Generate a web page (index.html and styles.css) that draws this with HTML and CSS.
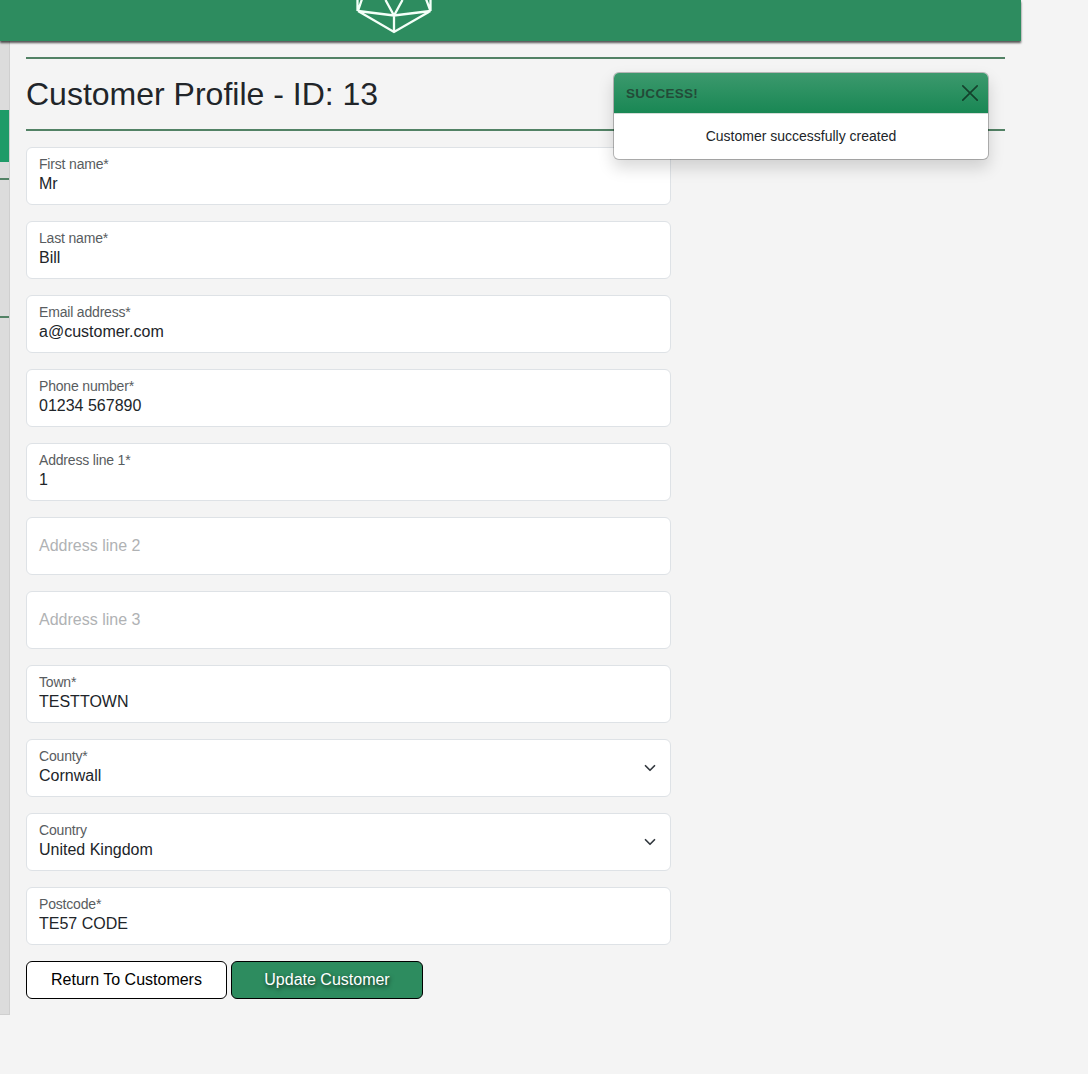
FILE: index.html
```
<!DOCTYPE html>
<html lang="en">
<head>
<meta charset="utf-8">
<title>Customer Profile</title>
<link rel="stylesheet" href="styles.css">
</head>
<body>
<header class="topbar">
  <svg class="logo" width="80" height="41" viewBox="0 0 80 41" fill="none" stroke="#f4fff8" stroke-width="2.300">
    <path d="M4 11 40 32l36.500-21M4 11 40 15.500 76.500 11M40 15.500V32M31.500 0 40 15.500 48.500 0M3.500-1v12M76.500-1v12M8-1 4 11M72-1l4.500 12"/>
  </svg>
</header>
<div class="shell">
  <aside class="sidebar">
    <div class="nav-active"></div>
    <hr class="nav-rule">
    <hr class="nav-rule nav-rule-last">
  </aside>
  <main class="content">
    <hr class="rule">
    <h1 class="title">Customer Profile - ID: 13</h1>
    <hr class="rule">
    <form class="form">
      <div class="field"><span class="label">First name*</span><span class="value">Mr</span></div>
      <div class="field"><span class="label">Last name*</span><span class="value">Bill</span></div>
      <div class="field"><span class="label">Email address*</span><span class="value">a@customer.com</span></div>
      <div class="field"><span class="label">Phone number*</span><span class="value">01234 567890</span></div>
      <div class="field"><span class="label">Address line 1*</span><span class="value">1</span></div>
      <div class="field empty"><span class="placeholder">Address line 2</span></div>
      <div class="field empty"><span class="placeholder">Address line 3</span></div>
      <div class="field"><span class="label">Town*</span><span class="value">TESTTOWN</span></div>
      <div class="field select"><div class="text"><span class="label">County*</span><span class="value">Cornwall</span></div>
        <svg class="chevron" width="16" height="12" viewBox="0 0 16 16" fill="none" stroke="#343a40" stroke-width="2.300" stroke-linecap="round" stroke-linejoin="round"><path d="m2 5 6 6 6-6"/></svg></div>
      <div class="field select"><div class="text"><span class="label">Country</span><span class="value">United Kingdom</span></div>
        <svg class="chevron" width="16" height="12" viewBox="0 0 16 16" fill="none" stroke="#343a40" stroke-width="2.300" stroke-linecap="round" stroke-linejoin="round"><path d="m2 5 6 6 6-6"/></svg></div>
      <div class="field"><span class="label">Postcode*</span><span class="value">TE57 CODE</span></div>
      <div class="actions">
        <button type="button" class="btn btn-return">Return To Customers</button>
        <button type="button" class="btn btn-update">Update Customer</button>
      </div>
    </form>
  </main>
</div>
<div class="toast">
  <div class="toast-head">
    <strong class="toast-title">SUCCESS!</strong>
    <svg class="close" width="16" height="16" viewBox="0 0 16 16" fill="none" stroke="#000" stroke-width="1.700" stroke-linecap="round"><path d="m.8.8 14.400 14.400M15.200.8.8 15.200"/></svg>
  </div>
  <div class="toast-body">Customer successfully created</div>
</div>
</body>
</html>
```
FILE: styles.css
```
* { box-sizing: border-box; }
body {
  margin: 0;
  min-height: 1074px;
  background: #f4f4f4;
  color: #212529;
  font: 16px/24px "Liberation Sans", Arial, sans-serif;
}
.topbar {
  position: relative;
  width: 1021px;
  height: 41px;
  padding-left: 354px;
  background: #2d8c5f;
  box-shadow: 0 2px 2px rgba(0, 0, 0, .65);
}
.logo { display: block; }
.shell { display: flex; width: 1021px; height: 974px; }
.sidebar {
  width: 10px;
  padding-top: 69px;
  background: #dcdcdc;
  border-right: 1px solid #cfcfcf;
  border-bottom: 1px solid #cfcfcf;
}
.nav-active { height: 52px; background: #1f9b68; }
.nav-rule { height: 2px; margin: 16px 0 0; border: 0; background: #528265; }
.nav-rule-last { margin-top: 136px; }
.content { flex: 1; padding: 16px 16px 0; }
.rule { height: 2px; margin: 0; border: 0; background: #528265; }
.title { margin: 0; height: 70px; font-size: 32px; font-weight: 400; line-height: 70px; }
.form { display: flex; flex-direction: column; gap: 16px; width: 645px; margin-top: 16px; }
.field {
  display: flex;
  flex-direction: column;
  height: 58px;
  padding: 7px 12px 0;
  background: #fff;
  border: 1px solid #dee2e6;
  border-radius: 6px;
}
.label { display: block; font-size: 14px; letter-spacing: -.18px; line-height: 19px; color: #585c60; }
.value { display: block; line-height: 20px; }
.empty { justify-content: center; padding-top: 0; }
.placeholder { color: #b0b2b4; }
.select { flex-direction: row; justify-content: space-between; }
.chevron { margin: 15px 0 0; }
.actions { display: flex; gap: 4px; }
.btn {
  height: 38px;
  padding: 0;
  border: 1px solid #000;
  border-radius: 6px;
  font: inherit;
}
.btn-return { width: 201px; background: #fff; color: #000; }
.btn-update { width: 192px; background: #2d8c5f; color: #fff; text-shadow: 1px 2px 4px rgba(0, 0, 0, .7); }
.toast {
  position: absolute;
  left: 613px;
  top: 72px;
  width: 376px;
  height: 88px;
  overflow: hidden;
  background: #fff;
  background-clip: padding-box;
  border: 1px solid rgba(0, 0, 0, .24);
  border-radius: 6px;
  box-shadow: 0 8px 16px rgba(0, 0, 0, .15);
  font-size: 14px;
}
.toast-head {
  display: flex;
  align-items: center;
  justify-content: space-between;
  height: 41px;
  padding: 0 10px 0 12px;
  background: linear-gradient(#3c996d, #198754) padding-box;
  border-bottom: 1px solid #d3dcd7;
}
.toast-title { padding-top: 1px; font-size: 13.5px; letter-spacing: .3px; color: #234b38; }
.close { opacity: .55; overflow: visible; }
.toast-body { line-height: 21px; padding: 12px; text-align: center; }
```
